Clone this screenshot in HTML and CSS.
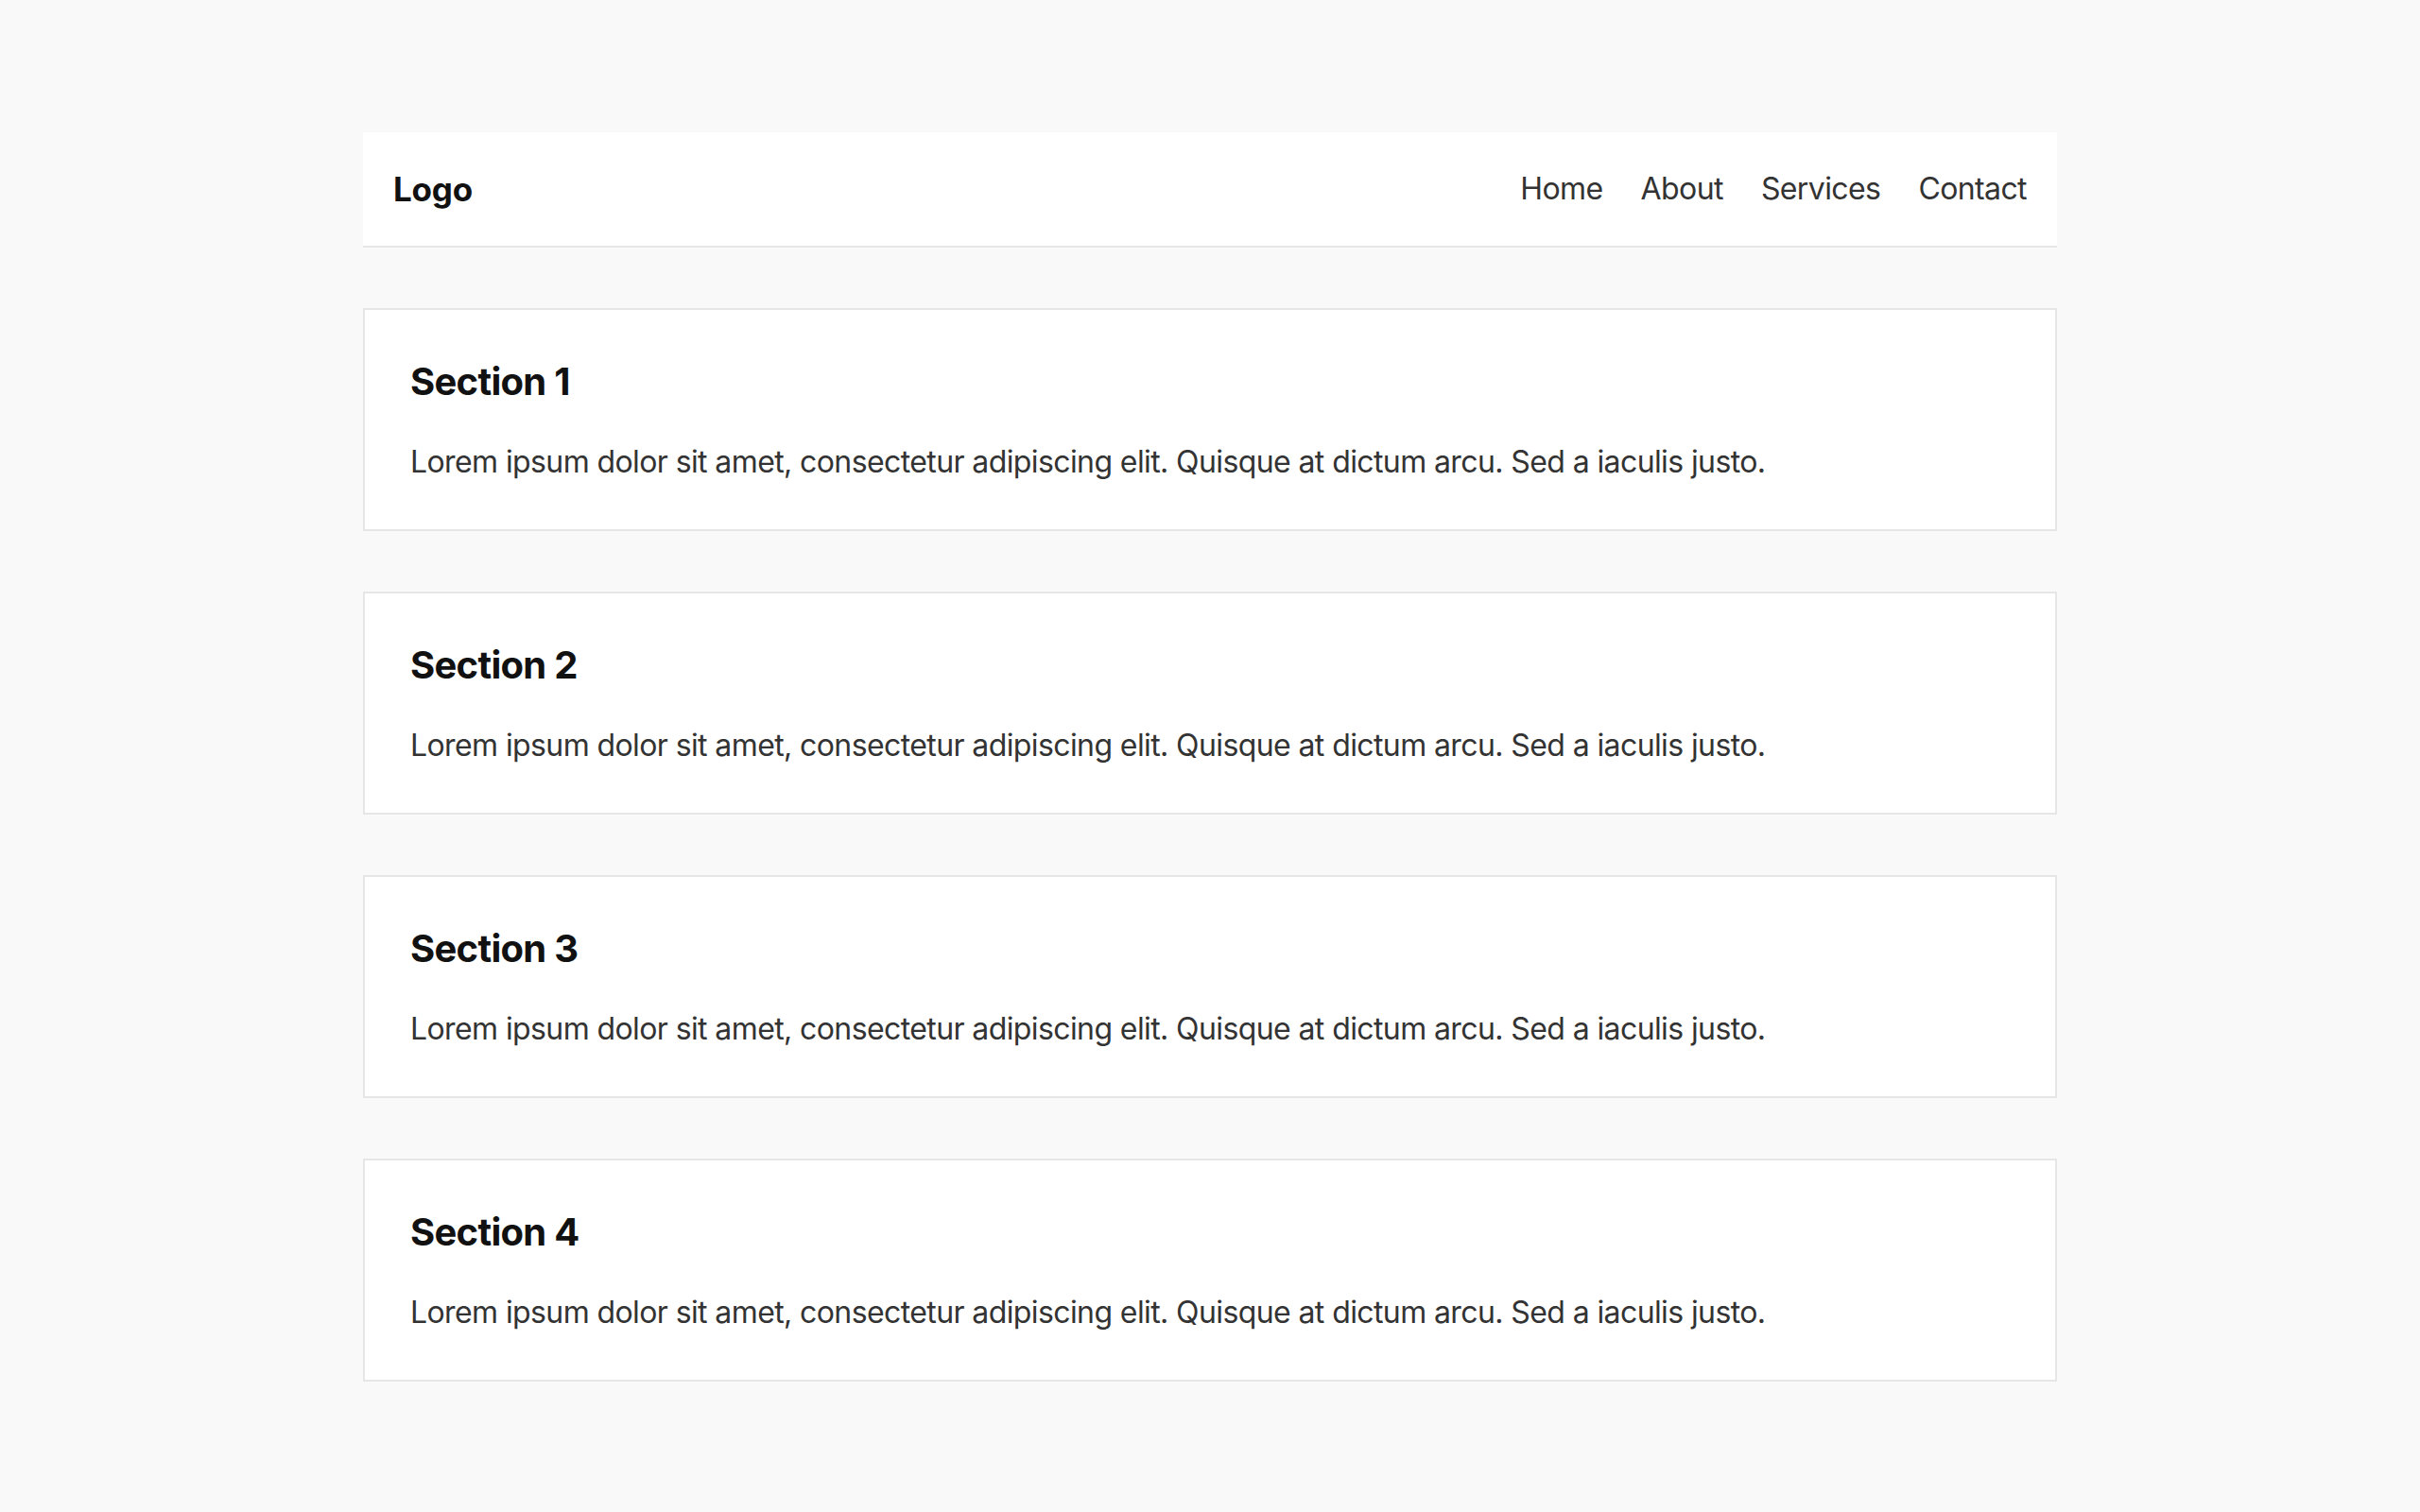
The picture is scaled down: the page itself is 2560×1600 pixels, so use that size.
FILE: index.html
```html
<!DOCTYPE html>
<html lang="en">
<head>
<meta charset="utf-8">
<title>Layout</title>
<link rel="stylesheet" href="styles.css">
</head>
<body>
<div class="page">
  <header class="site-header">
    <div class="logo">Logo</div>
    <nav class="nav">
      <a href="#">Home</a>
      <a href="#">About</a>
      <a href="#">Services</a>
      <a href="#">Contact</a>
    </nav>
  </header>
  <main class="sections">
    <section class="card">
      <h2>Section 1</h2>
      <p>Lorem ipsum dolor sit amet, consectetur adipiscing elit. Quisque at dictum arcu. Sed a iaculis justo.</p>
    </section>
    <section class="card">
      <h2>Section 2</h2>
      <p>Lorem ipsum dolor sit amet, consectetur adipiscing elit. Quisque at dictum arcu. Sed a iaculis justo.</p>
    </section>
    <section class="card">
      <h2>Section 3</h2>
      <p>Lorem ipsum dolor sit amet, consectetur adipiscing elit. Quisque at dictum arcu. Sed a iaculis justo.</p>
    </section>
    <section class="card">
      <h2>Section 4</h2>
      <p>Lorem ipsum dolor sit amet, consectetur adipiscing elit. Quisque at dictum arcu. Sed a iaculis justo.</p>
    </section>
  </main>
</div>
</body>
</html>
```
FILE: styles.css
```css
html, body {
  margin: 0;
  padding: 0;
}

body {
  background: #f9f9f9;
  font-family: Inter, "Noto Sans", "Liberation Sans", sans-serif;
  color: #333;
}

.page {
  width: 70%;
  margin: 0 auto;
  padding: 140px 0 100px;
}

.site-header {
  display: flex;
  justify-content: space-between;
  align-items: center;
  background: #fff;
  border-bottom: 2px solid #e6e6e6;
  padding: 32px 32px;
  height: 56px;
}

.logo {
  font-size: 35px;
  font-weight: 700;
  color: #111;
  line-height: 56px;
  letter-spacing: -0.2px;
}

.nav {
  display: flex;
  gap: 40px;
}

.nav a {
  font-size: 32px;
  line-height: 56px;
  color: #333;
  text-decoration: none;
  letter-spacing: -0.6px;
}

.sections {
  display: flex;
  flex-direction: column;
  gap: 64px;
  margin-top: 64px;
}

.card {
  background: #fff;
  border: 2px solid #e6e6e6;
  padding: 48px;
}

.card h2 {
  margin: 0 0 34px;
  font-size: 40px;
  line-height: 56px;
  font-weight: 700;
  color: #111;
  letter-spacing: -0.7px;
}

.card p {
  margin: 0;
  font-size: 32px;
  line-height: 46px;
  color: #333;
  letter-spacing: -0.6px;
}
```
